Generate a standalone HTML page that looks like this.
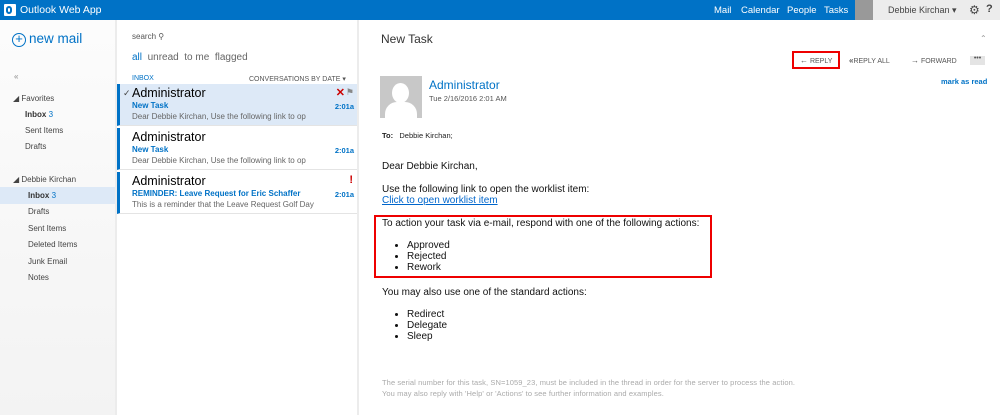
<!DOCTYPE html>
<html><head><meta charset="utf-8"><style>
*{margin:0;padding:0;box-sizing:border-box}
body{width:1000px;height:415px;overflow:hidden;background:#fff;font-family:"Liberation Sans",sans-serif;position:relative;color:#333}
.a{position:absolute;white-space:nowrap}
.top{left:0;top:0;width:1000px;height:20px;background:#0072c6}
.nav{left:0;top:20px;width:115px;height:395px;background:linear-gradient(#fcfcfc,#f3f3f3)}
.f{font-size:8px;color:#444}
.it{left:117px;width:240px;height:42px;border-left:3px solid #0072c6;border-bottom:1px solid #e4e4e4}
.nm{font-size:12.5px;color:#000;left:12px;top:2px}
.sb{font-size:8px;color:#0072c6;font-weight:bold;left:12px;top:17px}
.pv{font-size:8px;color:#666;left:12px;top:28px}
.tm{font-size:7.5px;color:#0072c6;font-weight:bold;right:3px;top:18px}
.b{font-size:10px;color:#111}
.fw{font-size:7px;color:#555}
ul{position:absolute;left:407px;font-size:10px;color:#111;line-height:11px}
</style></head><body>
<div class="a top"></div>
<div class="a" style="left:4px;top:4px;width:12px;height:12px;background:#fff;border-radius:1px"></div>
<div class="a" style="left:6px;top:6px;width:6px;height:8px;border:2px solid #0072c6;border-radius:3px"></div>
<div class="a" style="left:20px;top:4px;font-size:10.5px;color:#fff">Outlook Web App</div>
<div class="a" style="left:714px;top:5px;font-size:9.5px;color:#fff">Mail</div>
<div class="a" style="left:741px;top:5px;font-size:9.5px;color:#fff">Calendar</div>
<div class="a" style="left:787px;top:5px;font-size:9.5px;color:#fff">People</div>
<div class="a" style="left:824px;top:5px;font-size:9.5px;color:#fff">Tasks</div>
<div class="a" style="left:718px;top:17px;width:0;height:0;border:3px solid transparent;border-bottom-color:#fff"></div>
<div class="a" style="left:855px;top:0;width:18px;height:20px;background:#999"></div>
<div class="a" style="left:873px;top:0;width:127px;height:20px;background:#ececec"></div>
<div class="a" style="left:888px;top:5px;font-size:9px;color:#444">Debbie Kirchan ▾</div>
<div class="a" style="left:969px;top:3px;font-size:12px;color:#444">⚙</div>
<div class="a" style="left:986px;top:3px;font-size:11px;color:#444;font-weight:bold">?</div>

<div class="a nav"></div>
<div class="a" style="left:12px;top:33px;width:14px;height:14px;border:1.5px solid #0072c6;border-radius:50%;color:#0072c6;font-size:13px;line-height:10px;text-align:center">+</div>
<div class="a" style="left:29px;top:31px;font-size:13.5px;color:#0072c6">new mail</div>
<div class="a" style="left:14px;top:72px;font-size:8px;color:#888">«</div>
<div class="a f" style="left:13px;top:94px">◢ Favorites</div>
<div class="a f" style="left:25px;top:110px;font-weight:bold;color:#333">Inbox <span style="color:#0072c6;font-weight:normal">3</span></div>
<div class="a f" style="left:25px;top:126px">Sent Items</div>
<div class="a f" style="left:25px;top:142px">Drafts</div>
<div class="a f" style="left:13px;top:175px">◢ Debbie Kirchan</div>
<div class="a" style="left:0;top:187px;width:115px;height:17px;background:#dde9f7"></div>
<div class="a f" style="left:28px;top:191px;font-weight:bold;color:#333">Inbox <span style="color:#0072c6;font-weight:normal">3</span></div>
<div class="a f" style="left:28px;top:207px">Drafts</div>
<div class="a f" style="left:28px;top:224px">Sent Items</div>
<div class="a f" style="left:28px;top:240px">Deleted Items</div>
<div class="a f" style="left:28px;top:257px">Junk Email</div>
<div class="a f" style="left:28px;top:273px">Notes</div>
<div class="a" style="left:115px;top:20px;width:2px;height:395px;background:#ececec"></div>

<div class="a" style="left:132px;top:32px;font-size:8px;color:#555">search ⚲</div>
<div class="a" style="left:132px;top:52px;font-size:10px;color:#666"><span style="color:#0072c6">all</span>&nbsp; unread&nbsp; to me&nbsp; flagged</div>
<div class="a" style="left:132px;top:75px;font-size:7px;color:#0072c6">INBOX</div>
<div class="a" style="left:249px;top:75px;font-size:7px;color:#555">CONVERSATIONS BY DATE ▾</div>
<div class="a it" style="top:84px;background:#dde9f7">
<div class="a" style="left:3px;top:4px;font-size:9px;color:#444">✓</div>
<div class="a nm">Administrator</div><div class="a sb">New Task</div>
<div class="a pv">Dear Debbie Kirchan, Use the following link to op</div>
<div class="a" style="right:12px;top:2px;font-size:11px;color:#c00;font-weight:bold">✕</div>
<div class="a" style="right:3px;top:3px;font-size:9px;color:#888">⚑</div>
<div class="a tm">2:01a</div></div>
<div class="a it" style="top:128px"><div class="a nm">Administrator</div><div class="a sb">New Task</div>
<div class="a pv">Dear Debbie Kirchan, Use the following link to op</div><div class="a tm">2:01a</div></div>
<div class="a it" style="top:172px"><div class="a nm">Administrator</div><div class="a sb">REMINDER: Leave Request for Eric Schaffer</div>
<div class="a pv">This is a reminder that the Leave Request Golf Day</div>
<div class="a" style="right:4px;top:2px;font-size:11px;color:#c00;font-weight:bold">!</div><div class="a tm">2:01a</div></div>
<div class="a" style="left:357px;top:20px;width:2px;height:395px;background:#ececec"></div>

<div class="a" style="left:381px;top:32px;font-size:12px;color:#333">New Task</div>
<div class="a" style="left:980px;top:34px;font-size:8px;color:#999">⌃</div>
<div class="a" style="left:792px;top:51px;width:48px;height:18px;border:2px solid #e00"></div>
<div class="a fw" style="left:800px;top:56px"><b style="font-size:8px">←</b> REPLY</div>
<div class="a fw" style="left:849px;top:56px"><b style="font-size:8px">«</b>REPLY ALL</div>
<div class="a fw" style="left:911px;top:56px"><b style="font-size:8px">→</b> FORWARD</div>
<div class="a" style="left:970px;top:56px;width:15px;height:9px;background:#e4e4e4;font-size:7px;line-height:5px;text-align:center;color:#555">•••</div>
<div class="a" style="left:380px;top:76px;width:42px;height:42px;background:#c8c8c8;overflow:hidden">
<div class="a" style="left:12px;top:7px;width:17px;height:20px;border-radius:50%;background:#fff"></div>
<div class="a" style="left:5px;top:26px;width:32px;height:24px;border-radius:12px 12px 0 0;background:#fff"></div></div>
<div class="a" style="left:429px;top:78px;font-size:12px;color:#0072c6">Administrator</div>
<div class="a" style="left:429px;top:94px;font-size:7.5px;color:#555">Tue 2/16/2016 2:01 AM</div>
<div class="a" style="left:941px;top:77px;font-size:7.5px;color:#0072c6;font-weight:bold">mark as read</div>
<div class="a" style="left:382px;top:131px;font-size:7.5px;color:#222"><b>To:</b>&nbsp;&nbsp; Debbie Kirchan;</div>

<div class="a b" style="left:382px;top:161px">Dear Debbie Kirchan,</div>
<div class="a b" style="left:382px;top:184px">Use the following link to open the worklist item:</div>
<div class="a b" style="left:382px;top:195px;color:#0066cc;text-decoration:underline">Click to open worklist item</div>
<div class="a" style="left:374px;top:215px;width:338px;height:63px;border:2px solid #e00"></div>
<div class="a b" style="left:382px;top:218px">To action your task via e-mail, respond with one of the following actions:</div>
<ul style="top:240px"><li>Approved</li><li>Rejected</li><li>Rework</li></ul>
<div class="a b" style="left:382px;top:287px">You may also use one of the standard actions:</div>
<ul style="top:309px"><li>Redirect</li><li>Delegate</li><li>Sleep</li></ul>
<div class="a" style="left:382px;top:377px;font-size:7.5px;color:#aaa;line-height:11px;letter-spacing:0.1px">The serial number for this task, SN=1059_23, must be included in the thread in order for the server to process the action.<br>You may also reply with 'Help' or 'Actions' to see further information and examples.</div>
</body></html>
